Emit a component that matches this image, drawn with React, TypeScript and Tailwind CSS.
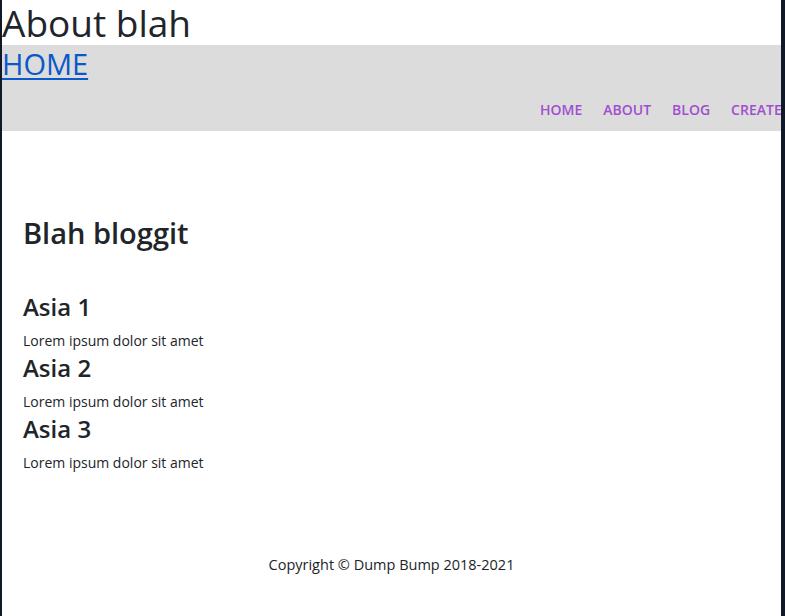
export default function App() {
  const posts = [
    { title: "Asia 1", body: "Lorem ipsum dolor sit amet" },
    { title: "Asia 2", body: "Lorem ipsum dolor sit amet" },
    { title: "Asia 3", body: "Lorem ipsum dolor sit amet" },
  ];

  return (
    <div className="min-h-[616px] border-l-2 border-r-4 border-[#111827] bg-white font-['Open_Sans',sans-serif] text-[#212529]">
      <h1 className="text-[37px] leading-[45px]">About blah</h1>

      <header className="h-[86px] overflow-hidden bg-[#dcdcdc]">
        <a href="#" className="block w-fit text-[29px] leading-[38px] text-[#0a58ca] underline decoration-2 underline-offset-[3px]">
          HOME
        </a>
        <ul className="mt-[16px] flex gap-[21px] whitespace-nowrap pl-[538px] text-[14px] font-semibold text-[#a04fd0]">
          <li>HOME</li>
          <li>ABOUT</li>
          <li>BLOG</li>
          <li>CREATE</li>
        </ul>
      </header>

      <main className="px-[21px] pt-[84px]">
        <h2 className="text-[29px] leading-[36px] font-semibold">Blah bloggit</h2>
        <div className="mt-[39px]">
          {posts.map((p) => (
            <div key={p.title}>
              <h3 className="text-[24px] leading-[33px] font-semibold">{p.title}</h3>
              <p className="mt-[7px] text-[14px] leading-[21px]">{p.body}</p>
            </div>
          ))}
        </div>
      </main>

      <footer className="pt-[82px] text-center text-[14.5px] leading-[20px]">
        Copyright © Dump Bump 2018-2021
      </footer>
    </div>
  );
}
